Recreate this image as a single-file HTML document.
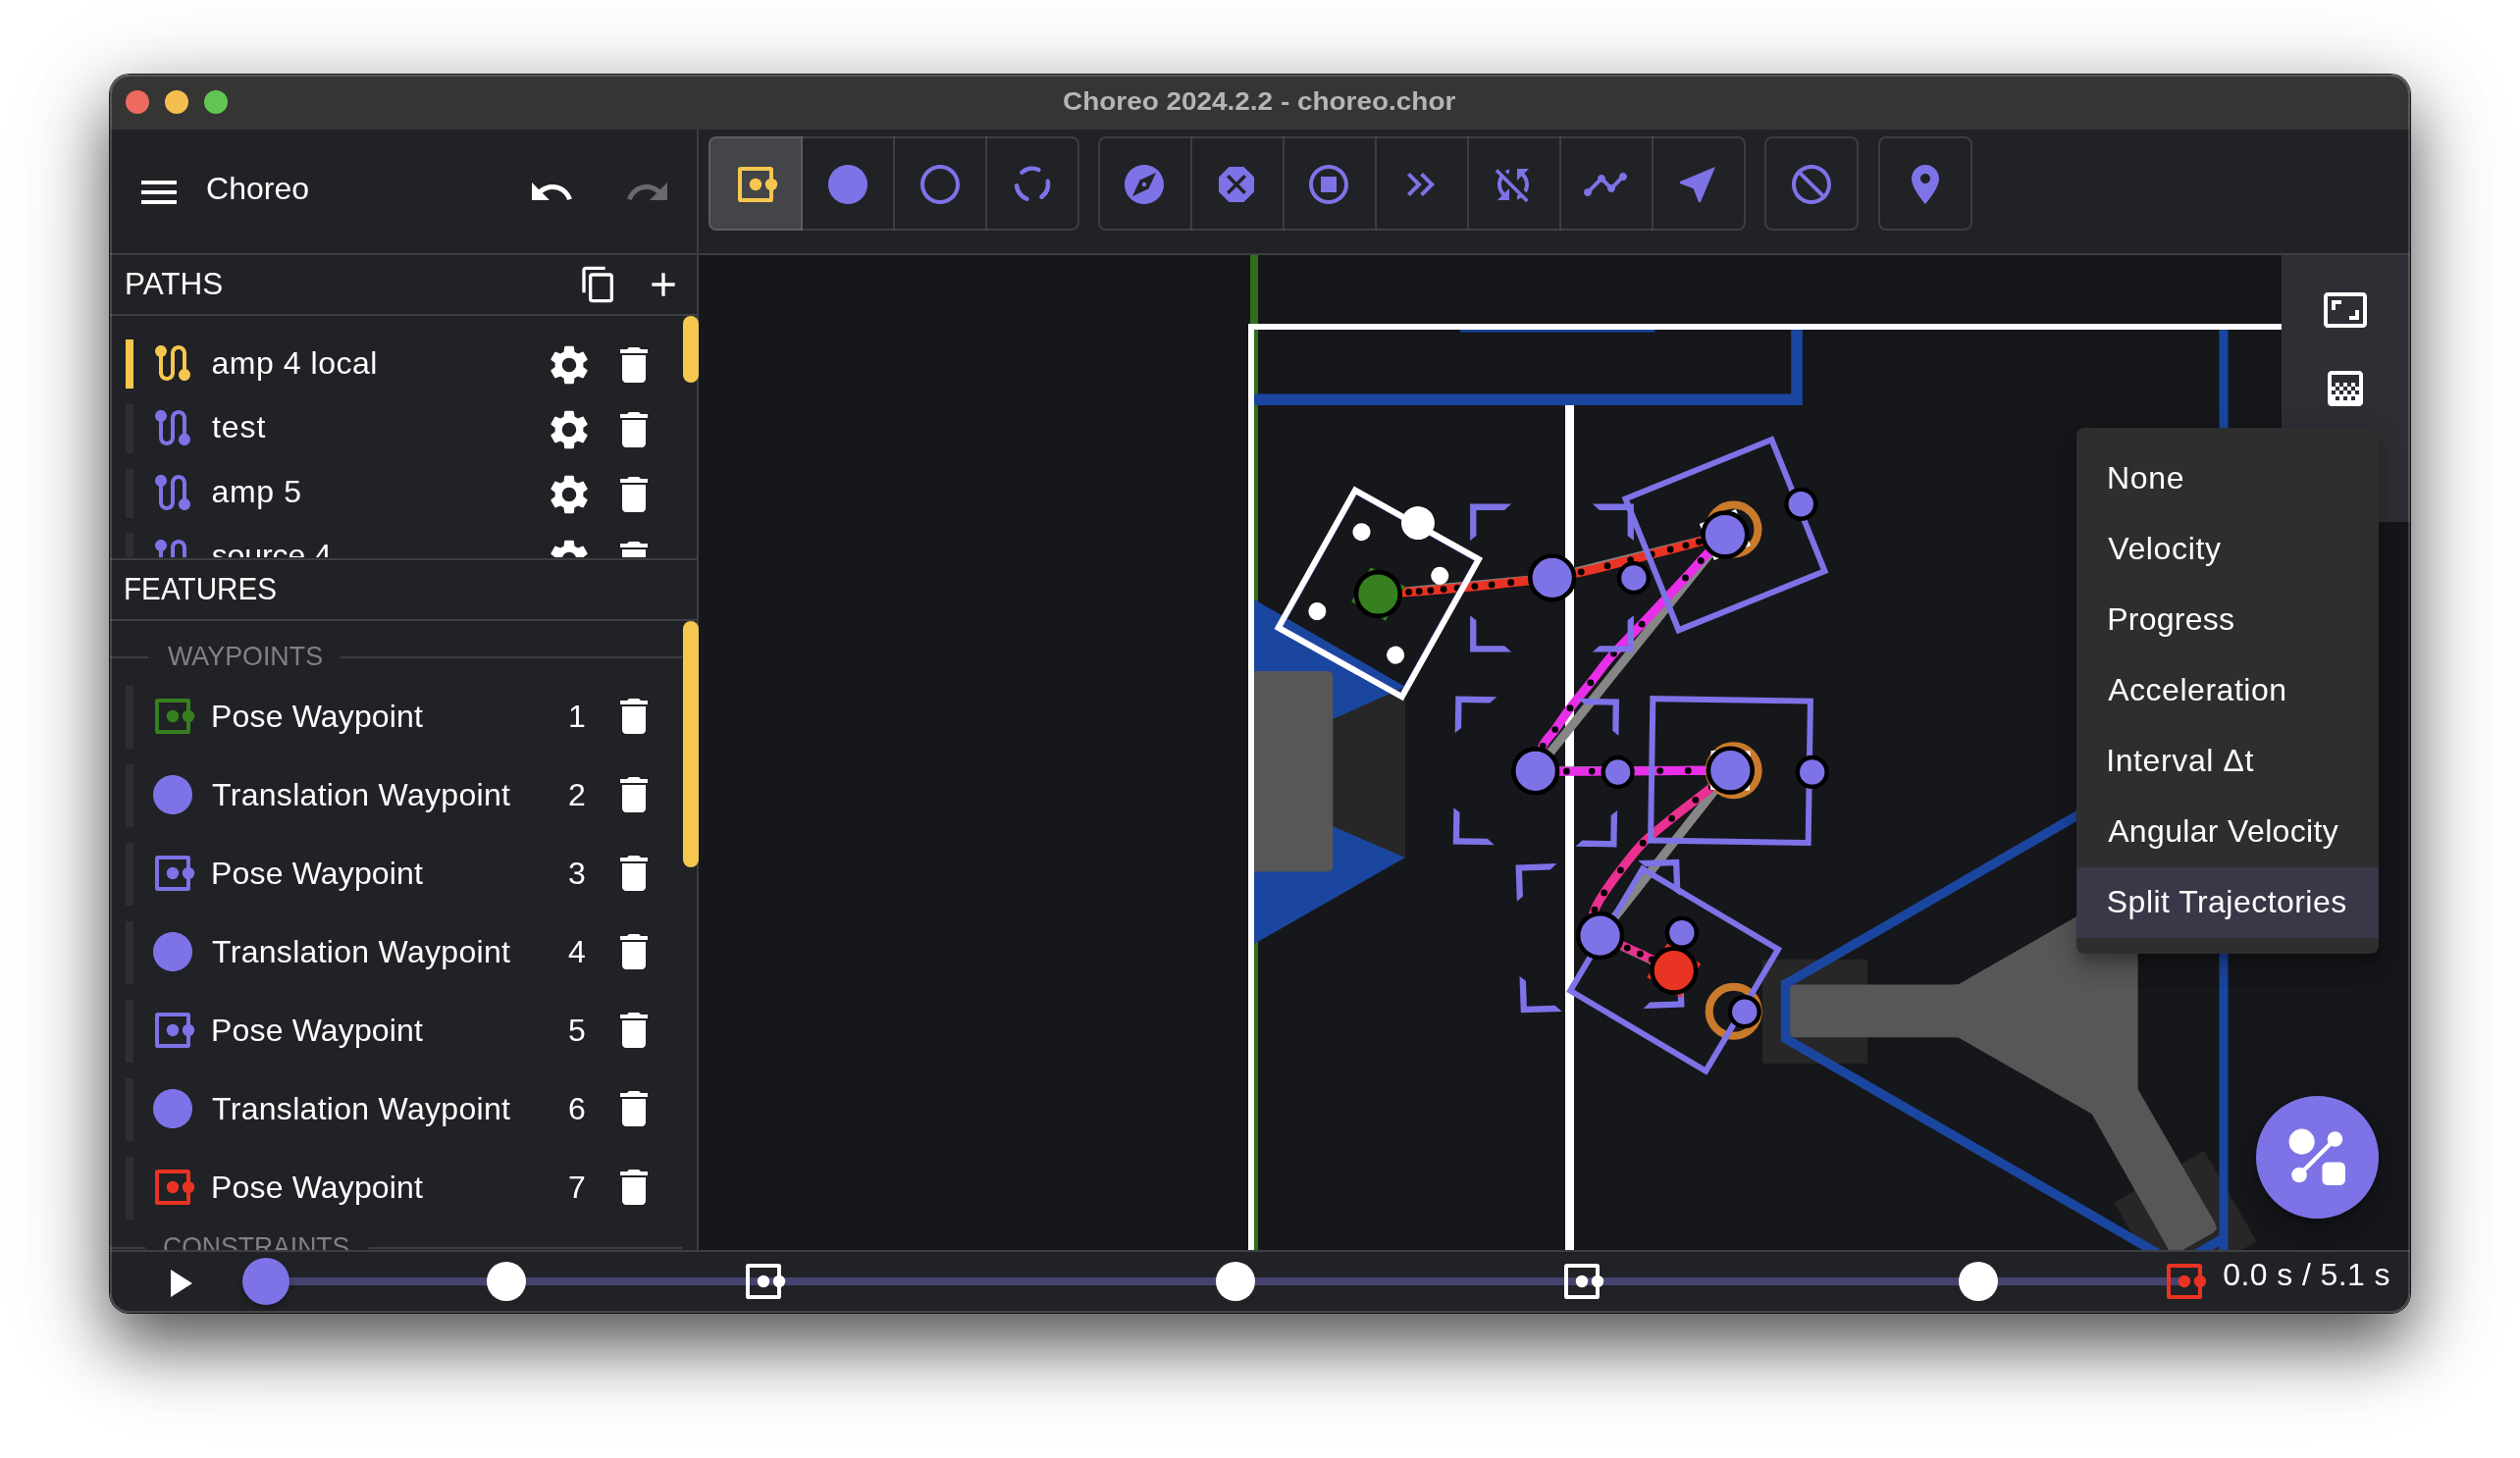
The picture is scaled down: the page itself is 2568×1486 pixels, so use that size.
<!DOCTYPE html>
<html lang="en"><head><meta charset="utf-8"><title>Choreo 2024.2.2 - choreo.chor</title>
<style>
html,body{margin:0;padding:0;background:#fff;}
body{width:2568px;height:1486px;overflow:hidden;position:relative;font-family:"Liberation Sans",sans-serif;}
.abs,.ic,.t,.r{position:absolute;}
.ic{display:block;overflow:visible;}
.t{white-space:nowrap;line-height:1;}
#shadow{position:absolute;left:112px;top:76px;width:2344px;height:1262px;border-radius:20px;
 box-shadow:0 0 0 1px rgba(0,0,0,.85), 0 32px 68px 0 rgba(0,0,0,.62), 0 20px 120px 0 rgba(0,0,0,.16);}
#win{will-change:transform;position:absolute;left:0;top:0;width:2568px;height:1486px;clip-path:inset(76px 112px 148px 112px round 20px);}
#rim{position:absolute;left:112px;top:76px;width:2344px;height:1262px;border-radius:20px;box-sizing:border-box;border:2px solid rgba(255,255,255,.17);pointer-events:none;}
.tb{position:absolute;top:139px;width:96px;height:96px;box-sizing:border-box;border:2px solid rgba(255,255,255,.125);}
</style></head><body>
<div id="shadow"></div>
<div id="win">

<div class="r" style="left:112px;top:76px;width:2344px;height:56px;background:#353533"></div>
<div class="r" style="left:112px;top:132px;width:2344px;height:1206px;background:#212226"></div>
<div class="r" style="left:128px;top:92px;width:24px;height:24px;border-radius:50%;background:#ed6a5f"></div>
<div class="r" style="left:168px;top:92px;width:24px;height:24px;border-radius:50%;background:#f5bf4f"></div>
<div class="r" style="left:208px;top:92px;width:24px;height:24px;border-radius:50%;background:#61c554"></div>
<div class="t " style="left:1082.99px;top:89.99px;font-size:26px;letter-spacing:0.000px;color:#b5b5b3;transform:scaleX(1.0738);transform-origin:0 0;font-weight:700;">Choreo 2024.2.2 - choreo.chor</div>
<div class="r" style="left:712px;top:260px;width:1744px;height:1014px;overflow:hidden;background:#16171b">
<svg class="ic" style="left:0;top:0;width:1744px;height:1014px" viewBox="712 260 1744 1014">
<line x1="1278" y1="260" x2="1278" y2="1274" stroke="#2f6e1c" stroke-width="8" stroke-linecap="butt"/>
<rect x="1278" y="700" width="154" height="174" fill="#272727"/>
<polygon points="1278.0,611.0 1432.0,700.0 1358.0,733.0 1358.0,842.0 1432.0,874.0 1278.0,962.0" fill="#1b469f"/>
<rect x="1274" y="684" width="84.3" height="204.5" rx="5" fill="#575757"/>
<polyline points="1278,407.3 1831,407.3 1831,336" fill="none" stroke="#1b469f" stroke-width="11.6"/>
<line x1="1488" y1="337" x2="1686.5" y2="337" stroke="#1b469f" stroke-width="3" stroke-linecap="butt"/>
<line x1="1599.5" y1="413" x2="1599.5" y2="1274" stroke="#fff" stroke-width="9" stroke-linecap="butt"/>
<rect x="1796" y="977.8" width="107" height="106" fill="#272727"/>
<polygon points="2246.1,1172.7 2299.6,1265.3 2207.9,1318.3 2154.4,1225.7" fill="#272727"/>
<polygon points="1990.0,1003.6 1995.3,1003.6 2178.6,898.3 2178.6,1110.0 2257.0,1246.0 2259.0,1252.5 2254.5,1257.0 2213.5,1280.0 2131.6,1135.3 1995.3,1057.2 1990.0,1057.2" fill="#575757"/>
<rect x="1823" y="1003.6" width="180" height="53.6" rx="5.5" fill="#575757"/>
<line x1="2266" y1="336" x2="2266" y2="1274" stroke="#1b469f" stroke-width="9" stroke-linecap="butt"/>
<polyline points="2266,745 1819.5,1003 1819.5,1058.5 2219,1289.2 2266,1262" fill="none" stroke="#1b469f" stroke-width="9.5" stroke-linejoin="miter"/>
<rect x="1275" y="333" width="2000" height="1400" fill="none" stroke="#fff" stroke-width="6"/>
<polyline points="1404.4,605.5 1581.7,588.9 1757.9,545.0 1564.7,785.8 1763.3,785.2 1630.6,953.6 1705.8,989.2" fill="none" stroke="#868686" stroke-width="9" stroke-linejoin="round"/>
<path d="M1404.4,605.5 C1409.6,605.1 1428.6,603.9 1435.6,603.4 C1442.6,602.9 1442.5,603.0 1446.2,602.7 C1449.9,602.4 1453.8,602.1 1457.9,601.8 C1462.1,601.4 1466.6,601.0 1471.1,600.6 C1475.6,600.2 1479.8,599.8 1485.1,599.3 C1490.4,598.8 1497.1,598.2 1502.9,597.6 C1508.7,597.0 1514.0,596.5 1520.1,595.9 C1526.2,595.2 1529.4,594.9 1539.7,593.7 C1550.0,592.5 1569.8,590.7 1581.7,588.9 C1593.6,587.1 1601.9,585.0 1611.3,583.0 C1620.7,581.0 1629.6,578.8 1638.0,576.7 C1646.4,574.6 1654.1,572.6 1661.6,570.6 C1669.1,568.6 1676.4,566.7 1683.2,564.9 C1690.0,563.1 1696.4,561.5 1702.2,560.0 C1708.0,558.5 1713.1,557.1 1718.0,555.8 C1722.9,554.5 1724.8,554.0 1731.4,552.2 C1738.1,550.4 1753.5,546.2 1757.9,545.0" fill="none" stroke="#e93323" stroke-width="9.1" stroke-linecap="round"/>
<path d="M1757.9,545.0 C1753.8,549.4 1740.0,564.1 1733.3,571.4 C1726.6,578.7 1727.5,578.1 1717.5,588.9 C1707.5,599.7 1685.3,623.2 1673.1,636.1 C1660.9,649.0 1653.1,656.2 1644.4,666.1 C1635.7,676.0 1628.2,686.5 1620.8,695.8 C1613.4,705.1 1606.0,713.7 1600.0,721.7 C1594.0,729.7 1589.3,737.2 1584.7,743.6 C1580.1,750.0 1575.5,753.3 1572.2,760.3 C1568.9,767.3 1566.0,781.5 1564.7,785.8" fill="none" stroke="#e82ee8" stroke-width="9.1" stroke-linecap="round"/>
<path d="M1564.7,785.8 C1570.0,785.9 1586.8,786.2 1596.4,786.2 C1606.0,786.2 1606.3,786.2 1622.2,786.1 C1638.1,786.0 1675.4,785.7 1691.7,785.6 C1708.0,785.5 1708.4,785.5 1720.3,785.4 C1732.2,785.3 1756.1,785.2 1763.3,785.2" fill="none" stroke="#e82ee8" stroke-width="9.1" stroke-linecap="round"/>
<path d="M1763.3,785.2 C1760.2,788.0 1750.3,797.2 1744.4,802.2 C1738.5,807.2 1734.6,810.0 1727.8,815.3 C1721.0,820.6 1712.5,826.9 1703.6,834.2 C1694.7,841.5 1682.9,850.4 1674.2,859.2 C1665.5,868.0 1658.0,878.4 1651.4,886.9 C1644.8,895.4 1639.1,903.3 1634.7,910.0 C1630.3,916.7 1627.2,922.1 1625.0,927.2 C1622.8,932.3 1622.1,938.3 1621.5,940.5" fill="none" stroke="#ea3090" stroke-width="9.1" stroke-linecap="round"/>
<path d="M1630.6,953.6 C1635.2,955.7 1651.5,963.0 1658.3,966.1 C1665.1,969.2 1667.2,970.2 1671.4,972.2 C1675.6,974.2 1677.6,975.0 1683.3,977.8 C1689.0,980.6 1702.0,987.3 1705.8,989.2" fill="none" stroke="#ea3090" stroke-width="9.1" stroke-linecap="round"/>
<g fill="#000"><circle cx="1435.6" cy="603.4" r="3.4"/><circle cx="1446.2" cy="602.7" r="3.4"/><circle cx="1457.9" cy="601.8" r="3.4"/><circle cx="1471.1" cy="600.6" r="3.4"/><circle cx="1485.1" cy="599.3" r="3.4"/><circle cx="1502.9" cy="597.6" r="3.4"/><circle cx="1520.1" cy="595.9" r="3.4"/><circle cx="1539.7" cy="593.7" r="3.4"/><circle cx="1611.3" cy="583" r="3.4"/><circle cx="1638" cy="576.7" r="3.4"/><circle cx="1661.6" cy="570.6" r="3.4"/><circle cx="1683.2" cy="564.9" r="3.4"/><circle cx="1702.2" cy="560.0" r="3.4"/><circle cx="1718" cy="555.8" r="3.4"/><circle cx="1731.4" cy="552.2" r="3.4"/><circle cx="1733.3" cy="571.4" r="3.4"/><circle cx="1717.5" cy="588.9" r="3.4"/><circle cx="1673.1" cy="636.1" r="3.4"/><circle cx="1644.4" cy="666.1" r="3.4"/><circle cx="1620.8" cy="695.8" r="3.4"/><circle cx="1600" cy="721.7" r="3.4"/><circle cx="1584.7" cy="743.6" r="3.4"/><circle cx="1572.2" cy="760.3" r="3.4"/><circle cx="1596.4" cy="786.2" r="3.4"/><circle cx="1622.2" cy="786.1" r="3.4"/><circle cx="1691.7" cy="785.6" r="3.4"/><circle cx="1720.3" cy="785.4" r="3.4"/><circle cx="1744.4" cy="802.2" r="3.4"/><circle cx="1727.8" cy="815.3" r="3.4"/><circle cx="1703.6" cy="834.2" r="3.4"/><circle cx="1674.2" cy="859.2" r="3.4"/><circle cx="1651.4" cy="886.9" r="3.4"/><circle cx="1634.7" cy="910" r="3.4"/><circle cx="1625" cy="927.2" r="3.4"/><circle cx="1658.3" cy="966.1" r="3.4"/><circle cx="1671.4" cy="972.2" r="3.4"/><circle cx="1683.3" cy="977.8" r="3.4"/></g>
<g transform="translate(1581.5,589.1) rotate(0)" fill="#7d73e7"><polygon points="-83.4,-75.5 -41.4,-75.5 -48.4,-69.2 -77.1,-69.2 -77.1,-43.1 -83.4,-38.1" /><polygon points="-83.4,75.5 -41.4,75.5 -48.4,69.2 -77.1,69.2 -77.1,43.1 -83.4,38.1" /><polygon points="83.4,-75.5 41.4,-75.5 48.4,-69.2 77.1,-69.2 77.1,-43.1 83.4,-38.1" /><polygon points="83.4,75.5 41.4,75.5 48.4,69.2 77.1,69.2 77.1,43.1 83.4,38.1" /></g>
<g transform="translate(1565.4,786.5) rotate(1.0)" fill="#7d73e7"><polygon points="-83.4,-75.5 -41.4,-75.5 -48.4,-69.2 -77.1,-69.2 -77.1,-43.1 -83.4,-38.1" /><polygon points="-83.4,75.5 -41.4,75.5 -48.4,69.2 -77.1,69.2 -77.1,43.1 -83.4,38.1" /><polygon points="83.4,-75.5 41.4,-75.5 48.4,-69.2 77.1,-69.2 77.1,-43.1 83.4,-38.1" /><polygon points="83.4,75.5 41.4,75.5 48.4,69.2 77.1,69.2 77.1,43.1 83.4,38.1" /></g>
<g transform="translate(1630.5,954.0) rotate(-2.0)" fill="#7d73e7"><polygon points="-83.4,-75.5 -41.4,-75.5 -48.4,-69.2 -77.1,-69.2 -77.1,-43.1 -83.4,-38.1" /><polygon points="-83.4,75.5 -41.4,75.5 -48.4,69.2 -77.1,69.2 -77.1,43.1 -83.4,38.1" /><polygon points="83.4,-75.5 41.4,-75.5 48.4,-69.2 77.1,-69.2 77.1,-43.1 83.4,-38.1" /><polygon points="83.4,75.5 41.4,75.5 48.4,69.2 77.1,69.2 77.1,43.1 83.4,38.1" /></g>
<circle cx="1766.5" cy="539.5" r="25" fill="none" stroke="#c97a2b" stroke-width="8"/>
<circle cx="1766.7" cy="785.3" r="25" fill="none" stroke="#c97a2b" stroke-width="8"/>
<circle cx="1766.7" cy="1030.8" r="25" fill="none" stroke="#c97a2b" stroke-width="8"/>
<g transform="translate(1758,545.2) rotate(-22)"><rect x="-80.3" y="-72.2" width="160.6" height="144.4" fill="none" stroke="#7d73e7" stroke-width="6"/></g>
<g transform="translate(1763.5,785.6) rotate(0.9)"><rect x="-80.3" y="-72.2" width="160.6" height="144.4" fill="none" stroke="#7d73e7" stroke-width="6"/></g>
<g transform="translate(1706.1,988.6) rotate(30.7)"><rect x="-80.3" y="-72.2" width="160.6" height="144.4" fill="none" stroke="#7d73e7" stroke-width="6"/></g>
<g transform="translate(1404.8,604.9) rotate(-60.8)"><rect x="-79.8" y="-71.7" width="159.6" height="143.4" fill="none" stroke="#7d73e7" stroke-width="6"/></g>
<g transform="translate(1404.8,604.9) rotate(-60.8)"><rect x="-80.3" y="-72.2" width="160.6" height="144.4" fill="none" stroke="#fff" stroke-width="6"/><circle cx="-46.3" cy="-45.7" r="9" fill="#fff"/><circle cx="-46.3" cy="45.7" r="9" fill="#fff"/><circle cx="46.3" cy="-45.7" r="9" fill="#fff"/><circle cx="46.3" cy="45.7" r="9" fill="#fff"/><circle cx="82.3" cy="0" r="17" fill="#fff"/></g>
<rect x="-20.0" y="-20.0" width="40" height="40" fill="#36801f" transform="translate(1404.4,605.5) rotate(-60.7)"/>
<rect x="-20.0" y="-20.0" width="40" height="40" fill="#fff" transform="translate(1757.9,545.0) rotate(-22)"/>
<rect x="-20.0" y="-20.0" width="40" height="40" fill="#fff" transform="translate(1763.3,785.2) rotate(0.9)"/>
<rect x="-20.0" y="-20.0" width="40" height="40" fill="#e93323" transform="translate(1705.8,989.2) rotate(30.9)"/>
<circle cx="1835.3" cy="513.8" r="14.9" fill="#7d73e7" stroke="#000" stroke-width="4.4"/>
<circle cx="1846.7" cy="786.9" r="14.9" fill="#7d73e7" stroke="#000" stroke-width="4.4"/>
<circle cx="1777.8" cy="1031.2" r="14.9" fill="#7d73e7" stroke="#000" stroke-width="4.4"/>
<circle cx="1664.9" cy="589" r="14.9" fill="#7d73e7" stroke="#000" stroke-width="4.4"/>
<circle cx="1648.6" cy="787" r="14.9" fill="#7d73e7" stroke="#000" stroke-width="4.4"/>
<circle cx="1713.9" cy="950.8" r="14.9" fill="#7d73e7" stroke="#000" stroke-width="4.4"/>
<circle cx="1404.4" cy="605.5" r="22.4" fill="#36801f" stroke="#000" stroke-width="4.6"/>
<circle cx="1581.7" cy="588.9" r="22.4" fill="#7d73e7" stroke="#000" stroke-width="4.6"/>
<circle cx="1757.9" cy="545.0" r="22.4" fill="#7d73e7" stroke="#000" stroke-width="4.6"/>
<circle cx="1564.7" cy="785.8" r="22.4" fill="#7d73e7" stroke="#000" stroke-width="4.6"/>
<circle cx="1763.3" cy="785.2" r="22.4" fill="#7d73e7" stroke="#000" stroke-width="4.6"/>
<circle cx="1630.6" cy="953.6" r="22.4" fill="#7d73e7" stroke="#000" stroke-width="4.6"/>
<circle cx="1705.8" cy="989.2" r="22.4" fill="#e93323" stroke="#000" stroke-width="4.6"/>
</svg></div>
<div class="r" style="left:112px;top:258px;width:2344px;height:2px;background:#3e3f43"></div>
<div class="r" style="left:710px;top:132px;width:2px;height:1143px;background:#3e3f43"></div>
<div class="r" style="left:112px;top:320px;width:598px;height:2px;background:#3e3f43"></div>
<div class="r" style="left:112px;top:568.5px;width:598px;height:2px;background:#3e3f43"></div>
<div class="r" style="left:112px;top:631.4px;width:598px;height:2px;background:#3e3f43"></div>
<svg class="ic" style="left:138px;top:172px;width:48px;height:48px" viewBox="0 0 24 24"><path fill="#fff" d="M3 18h18v-2H3v2zm0-5h18v-2H3v2zm0-7v2h18V6H3z"/></svg>
<div class="t " style="left:210.00px;top:176.31px;font-size:32px;letter-spacing:0.028px;color:#fff;">Choreo</div>
<svg class="ic" style="left:538px;top:172px;width:48px;height:48px" viewBox="0 0 24 24"><path fill="#fff" d="M12.5 8c-2.65 0-5.05.99-6.9 2.6L2 7v9h9l-3.62-3.62c1.39-1.16 3.16-1.88 5.12-1.88 3.54 0 6.55 2.31 7.6 5.5l2.37-.78C21.08 11.03 17.15 8 12.5 8z"/></svg>
<svg class="ic" style="left:636px;top:172px;width:48px;height:48px" viewBox="0 0 24 24"><path fill="#696a6e" d="M18.4 10.6C16.55 8.99 14.15 8 11.5 8c-4.65 0-8.58 3.03-9.96 7.22L3.9 16c1.05-3.19 4.05-5.5 7.6-5.5 1.95 0 3.73.72 5.12 1.88L13 16h9V7l-3.6 3.6z"/></svg>
<div class="t " style="left:127.05px;top:272.91px;font-size:32px;letter-spacing:0.000px;color:#fff;transform:scaleX(0.9835);transform-origin:0 0;">PATHS</div>
<svg class="ic" style="left:590px;top:270px;width:40px;height:40px" viewBox="0 0 24 24"><path fill="#fff" d="M16 1H4c-1.1 0-2 .9-2 2v14h2V3h12V1zm3 4H8c-1.1 0-2 .9-2 2v14c0 1.1.9 2 2 2h11c1.1 0 2-.9 2-2V7c0-1.1-.9-2-2-2zm0 16H8V7h11v14z"/></svg>
<svg class="ic" style="left:656px;top:270px;width:40px;height:40px" viewBox="0 0 24 24"><path fill="#fff" d="M19 13h-6v6h-2v-6H5v-2h6V5h2v6h6v2z"/></svg>
<div class="r" style="left:112px;top:322px;width:598px;height:246px;overflow:hidden">
<div class="r" style="left:16px;top:24px;width:8px;height:50px;background:#f6c74f"></div>
<svg class="ic" style="left:40px;top:24px;width:48px;height:48px" viewBox="0 0 24 24"><path fill="#f6c74f" d="M19 15.18V7c0-2.21-1.79-4-4-4s-4 1.79-4 4v10c0 1.1-.9 2-2 2s-2-.9-2-2V8.82C8.16 8.4 9 7.3 9 6c0-1.66-1.34-3-3-3S3 4.34 3 6c0 1.3.84 2.4 2 2.82V17c0 2.21 1.79 4 4 4s4-1.79 4-4V7c0-1.1.9-2 2-2s2 .9 2 2v8.18c-1.16.41-2 1.51-2 2.82 0 1.66 1.34 3 3 3s3-1.34 3-3c0-1.3-.84-2.4-2-2.82z"/></svg>
<div class="t " style="left:103.56px;top:31.91px;font-size:32px;letter-spacing:0.528px;color:#fff;">amp 4 local</div>
<svg class="ic" style="left:444px;top:26px;width:48px;height:48px" viewBox="0 0 24 24"><path fill="#fff" d="M19.14 12.94c.04-.3.06-.61.06-.94 0-.32-.02-.64-.07-.94l2.03-1.58c.18-.14.23-.41.12-.61l-1.92-3.32c-.12-.22-.37-.29-.59-.22l-2.39.96c-.5-.38-1.03-.7-1.62-.94l-.36-2.54c-.04-.24-.24-.41-.48-.41h-3.84c-.24 0-.43.17-.47.41l-.36 2.54c-.59.24-1.13.57-1.62.94l-2.39-.96c-.22-.08-.47 0-.59.22L2.74 8.87c-.12.21-.08.47.12.61l2.03 1.58c-.05.3-.09.63-.09.94s.02.64.07.94l-2.03 1.58c-.18.14-.23.41-.12.61l1.92 3.32c.12.22.37.29.59.22l2.39-.96c.5.38 1.03.7 1.62.94l.36 2.54c.05.24.24.41.48.41h3.84c.24 0 .44-.17.47-.41l.36-2.54c.59-.24 1.13-.56 1.62-.94l2.39.96c.22.08.47 0 .59-.22l1.92-3.32c.12-.22.07-.47-.12-.61l-2.01-1.58zM12 15.6c-1.98 0-3.6-1.62-3.6-3.6s1.62-3.6 3.6-3.6 3.6 1.62 3.6 3.6-1.62 3.6-3.6 3.6z"/></svg>
<svg class="ic" style="left:510px;top:26px;width:48px;height:48px" viewBox="0 0 24 24"><path fill="#fff" d="M6 19c0 1.1.9 2 2 2h8c1.1 0 2-.9 2-2V7H6v12zM19 4h-3.5l-1-1h-5l-1 1H5v2h14V4z"/></svg>
<div class="r" style="left:16px;top:90px;width:8px;height:50px;background:#2e2f34"></div>
<svg class="ic" style="left:40px;top:90.39999999999998px;width:48px;height:48px" viewBox="0 0 24 24"><path fill="#7d73e7" d="M19 15.18V7c0-2.21-1.79-4-4-4s-4 1.79-4 4v10c0 1.1-.9 2-2 2s-2-.9-2-2V8.82C8.16 8.4 9 7.3 9 6c0-1.66-1.34-3-3-3S3 4.34 3 6c0 1.3.84 2.4 2 2.82V17c0 2.21 1.79 4 4 4s4-1.79 4-4V7c0-1.1.9-2 2-2s2 .9 2 2v8.18c-1.16.41-2 1.51-2 2.82 0 1.66 1.34 3 3 3s3-1.34 3-3c0-1.3-.84-2.4-2-2.82z"/></svg>
<div class="t " style="left:104.01px;top:96.91px;font-size:32px;letter-spacing:0.901px;color:#fff;">test</div>
<svg class="ic" style="left:444px;top:92px;width:48px;height:48px" viewBox="0 0 24 24"><path fill="#fff" d="M19.14 12.94c.04-.3.06-.61.06-.94 0-.32-.02-.64-.07-.94l2.03-1.58c.18-.14.23-.41.12-.61l-1.92-3.32c-.12-.22-.37-.29-.59-.22l-2.39.96c-.5-.38-1.03-.7-1.62-.94l-.36-2.54c-.04-.24-.24-.41-.48-.41h-3.84c-.24 0-.43.17-.47.41l-.36 2.54c-.59.24-1.13.57-1.62.94l-2.39-.96c-.22-.08-.47 0-.59.22L2.74 8.87c-.12.21-.08.47.12.61l2.03 1.58c-.05.3-.09.63-.09.94s.02.64.07.94l-2.03 1.58c-.18.14-.23.41-.12.61l1.92 3.32c.12.22.37.29.59.22l2.39-.96c.5.38 1.03.7 1.62.94l.36 2.54c.05.24.24.41.48.41h3.84c.24 0 .44-.17.47-.41l.36-2.54c.59-.24 1.13-.56 1.62-.94l2.39.96c.22.08.47 0 .59-.22l1.92-3.32c.12-.22.07-.47-.12-.61l-2.01-1.58zM12 15.6c-1.98 0-3.6-1.62-3.6-3.6s1.62-3.6 3.6-3.6 3.6 1.62 3.6 3.6-1.62 3.6-3.6 3.6z"/></svg>
<svg class="ic" style="left:510px;top:92px;width:48px;height:48px" viewBox="0 0 24 24"><path fill="#fff" d="M6 19c0 1.1.9 2 2 2h8c1.1 0 2-.9 2-2V7H6v12zM19 4h-3.5l-1-1h-5l-1 1H5v2h14V4z"/></svg>
<div class="r" style="left:16px;top:155.5px;width:8px;height:50px;background:#2e2f34"></div>
<svg class="ic" style="left:40px;top:156.2px;width:48px;height:48px" viewBox="0 0 24 24"><path fill="#7d73e7" d="M19 15.18V7c0-2.21-1.79-4-4-4s-4 1.79-4 4v10c0 1.1-.9 2-2 2s-2-.9-2-2V8.82C8.16 8.4 9 7.3 9 6c0-1.66-1.34-3-3-3S3 4.34 3 6c0 1.3.84 2.4 2 2.82V17c0 2.21 1.79 4 4 4s4-1.79 4-4V7c0-1.1.9-2 2-2s2 .9 2 2v8.18c-1.16.41-2 1.51-2 2.82 0 1.66 1.34 3 3 3s3-1.34 3-3c0-1.3-.84-2.4-2-2.82z"/></svg>
<div class="t " style="left:103.56px;top:162.71px;font-size:32px;letter-spacing:0.620px;color:#fff;">amp 5</div>
<svg class="ic" style="left:444px;top:158.2px;width:48px;height:48px" viewBox="0 0 24 24"><path fill="#fff" d="M19.14 12.94c.04-.3.06-.61.06-.94 0-.32-.02-.64-.07-.94l2.03-1.58c.18-.14.23-.41.12-.61l-1.92-3.32c-.12-.22-.37-.29-.59-.22l-2.39.96c-.5-.38-1.03-.7-1.62-.94l-.36-2.54c-.04-.24-.24-.41-.48-.41h-3.84c-.24 0-.43.17-.47.41l-.36 2.54c-.59.24-1.13.57-1.62.94l-2.39-.96c-.22-.08-.47 0-.59.22L2.74 8.87c-.12.21-.08.47.12.61l2.03 1.58c-.05.3-.09.63-.09.94s.02.64.07.94l-2.03 1.58c-.18.14-.23.41-.12.61l1.92 3.32c.12.22.37.29.59.22l2.39-.96c.5.38 1.03.7 1.62.94l.36 2.54c.05.24.24.41.48.41h3.84c.24 0 .44-.17.47-.41l.36-2.54c.59-.24 1.13-.56 1.62-.94l2.39.96c.22.08.47 0 .59-.22l1.92-3.32c.12-.22.07-.47-.12-.61l-2.01-1.58zM12 15.6c-1.98 0-3.6-1.62-3.6-3.6s1.62-3.6 3.6-3.6 3.6 1.62 3.6 3.6-1.62 3.6-3.6 3.6z"/></svg>
<svg class="ic" style="left:510px;top:158.2px;width:48px;height:48px" viewBox="0 0 24 24"><path fill="#fff" d="M6 19c0 1.1.9 2 2 2h8c1.1 0 2-.9 2-2V7H6v12zM19 4h-3.5l-1-1h-5l-1 1H5v2h14V4z"/></svg>
<div class="r" style="left:16px;top:221px;width:8px;height:50px;background:#2e2f34"></div>
<svg class="ic" style="left:40px;top:222.20000000000005px;width:48px;height:48px" viewBox="0 0 24 24"><path fill="#7d73e7" d="M19 15.18V7c0-2.21-1.79-4-4-4s-4 1.79-4 4v10c0 1.1-.9 2-2 2s-2-.9-2-2V8.82C8.16 8.4 9 7.3 9 6c0-1.66-1.34-3-3-3S3 4.34 3 6c0 1.3.84 2.4 2 2.82V17c0 2.21 1.79 4 4 4s4-1.79 4-4V7c0-1.1.9-2 2-2s2 .9 2 2v8.18c-1.16.41-2 1.51-2 2.82 0 1.66 1.34 3 3 3s3-1.34 3-3c0-1.3-.84-2.4-2-2.82z"/></svg>
<div class="t " style="left:103.70px;top:227.91px;font-size:32px;letter-spacing:-0.105px;color:#fff;">source 4</div>
<svg class="ic" style="left:444px;top:224.20000000000005px;width:48px;height:48px" viewBox="0 0 24 24"><path fill="#fff" d="M19.14 12.94c.04-.3.06-.61.06-.94 0-.32-.02-.64-.07-.94l2.03-1.58c.18-.14.23-.41.12-.61l-1.92-3.32c-.12-.22-.37-.29-.59-.22l-2.39.96c-.5-.38-1.03-.7-1.62-.94l-.36-2.54c-.04-.24-.24-.41-.48-.41h-3.84c-.24 0-.43.17-.47.41l-.36 2.54c-.59.24-1.13.57-1.62.94l-2.39-.96c-.22-.08-.47 0-.59.22L2.74 8.87c-.12.21-.08.47.12.61l2.03 1.58c-.05.3-.09.63-.09.94s.02.64.07.94l-2.03 1.58c-.18.14-.23.41-.12.61l1.92 3.32c.12.22.37.29.59.22l2.39-.96c.5.38 1.03.7 1.62.94l.36 2.54c.05.24.24.41.48.41h3.84c.24 0 .44-.17.47-.41l.36-2.54c.59-.24 1.13-.56 1.62-.94l2.39.96c.22.08.47 0 .59-.22l1.92-3.32c.12-.22.07-.47-.12-.61l-2.01-1.58zM12 15.6c-1.98 0-3.6-1.62-3.6-3.6s1.62-3.6 3.6-3.6 3.6 1.62 3.6 3.6-1.62 3.6-3.6 3.6z"/></svg>
<svg class="ic" style="left:510px;top:224.20000000000005px;width:48px;height:48px" viewBox="0 0 24 24"><path fill="#fff" d="M6 19c0 1.1.9 2 2 2h8c1.1 0 2-.9 2-2V7H6v12zM19 4h-3.5l-1-1h-5l-1 1H5v2h14V4z"/></svg>
</div>
<div class="r" style="left:696px;top:322px;width:16px;height:68px;border-radius:8px;background:#f6c74f"></div>
<div class="t " style="left:126.05px;top:584.11px;font-size:32px;letter-spacing:0.000px;color:#fff;transform:scaleX(0.9272);transform-origin:0 0;">FEATURES</div>
<div class="r" style="left:112px;top:633px;width:598px;height:641px;overflow:hidden">
<div class="r" style="left:0;top:36px;width:39px;height:2px;background:#3e3f43"></div>
<div class="r" style="left:235px;top:36px;width:348px;height:2px;background:#3e3f43"></div>
<div class="t " style="left:58.56px;top:21.80px;font-size:28px;letter-spacing:0.000px;color:#808183;transform:scaleX(0.9584);transform-origin:0 0;">WAYPOINTS</div>
<div class="r" style="left:16px;top:66px;width:8px;height:64px;background:#2e2f34"></div>
<svg class="ic" style="left:40px;top:73px;width:48px;height:48px" viewBox="0 0 24 24"><rect x="4" y="4" width="16" height="16" rx="0.4" fill="none" stroke="#36801f" stroke-width="2"/><circle cx="12" cy="12" r="3.1" fill="#36801f"/><circle cx="20" cy="12" r="3.1" fill="#36801f"/></svg>
<div class="t " style="left:103.11px;top:81.31px;font-size:32px;letter-spacing:0.144px;color:#fff;">Pose Waypoint</div>
<div class="t " style="left:467.10px;top:81.31px;font-size:32px;letter-spacing:0.000px;color:#fff;">1</div>
<svg class="ic" style="left:510px;top:73px;width:48px;height:48px" viewBox="0 0 24 24"><path fill="#fff" d="M6 19c0 1.1.9 2 2 2h8c1.1 0 2-.9 2-2V7H6v12zM19 4h-3.5l-1-1h-5l-1 1H5v2h14V4z"/></svg>
<div class="r" style="left:16px;top:146px;width:8px;height:64px;background:#2e2f34"></div>
<svg class="ic" style="left:40px;top:153px;width:48px;height:48px" viewBox="0 0 24 24"><path fill="#7d73e7" d="M12 2C6.47 2 2 6.47 2 12s4.47 10 10 10 10-4.47 10-10S17.53 2 12 2z"/></svg>
<div class="t " style="left:104.07px;top:161.31px;font-size:32px;letter-spacing:0.295px;color:#fff;">Translation Waypoint</div>
<div class="t " style="left:467.10px;top:161.31px;font-size:32px;letter-spacing:0.000px;color:#fff;">2</div>
<svg class="ic" style="left:510px;top:153px;width:48px;height:48px" viewBox="0 0 24 24"><path fill="#fff" d="M6 19c0 1.1.9 2 2 2h8c1.1 0 2-.9 2-2V7H6v12zM19 4h-3.5l-1-1h-5l-1 1H5v2h14V4z"/></svg>
<div class="r" style="left:16px;top:226px;width:8px;height:64px;background:#2e2f34"></div>
<svg class="ic" style="left:40px;top:233px;width:48px;height:48px" viewBox="0 0 24 24"><rect x="4" y="4" width="16" height="16" rx="0.4" fill="none" stroke="#7d73e7" stroke-width="2"/><circle cx="12" cy="12" r="3.1" fill="#7d73e7"/><circle cx="20" cy="12" r="3.1" fill="#7d73e7"/></svg>
<div class="t " style="left:103.11px;top:241.31px;font-size:32px;letter-spacing:0.144px;color:#fff;">Pose Waypoint</div>
<div class="t " style="left:467.10px;top:241.31px;font-size:32px;letter-spacing:0.000px;color:#fff;">3</div>
<svg class="ic" style="left:510px;top:233px;width:48px;height:48px" viewBox="0 0 24 24"><path fill="#fff" d="M6 19c0 1.1.9 2 2 2h8c1.1 0 2-.9 2-2V7H6v12zM19 4h-3.5l-1-1h-5l-1 1H5v2h14V4z"/></svg>
<div class="r" style="left:16px;top:306px;width:8px;height:64px;background:#2e2f34"></div>
<svg class="ic" style="left:40px;top:313px;width:48px;height:48px" viewBox="0 0 24 24"><path fill="#7d73e7" d="M12 2C6.47 2 2 6.47 2 12s4.47 10 10 10 10-4.47 10-10S17.53 2 12 2z"/></svg>
<div class="t " style="left:104.07px;top:321.31px;font-size:32px;letter-spacing:0.295px;color:#fff;">Translation Waypoint</div>
<div class="t " style="left:467.10px;top:321.31px;font-size:32px;letter-spacing:0.000px;color:#fff;">4</div>
<svg class="ic" style="left:510px;top:313px;width:48px;height:48px" viewBox="0 0 24 24"><path fill="#fff" d="M6 19c0 1.1.9 2 2 2h8c1.1 0 2-.9 2-2V7H6v12zM19 4h-3.5l-1-1h-5l-1 1H5v2h14V4z"/></svg>
<div class="r" style="left:16px;top:386px;width:8px;height:64px;background:#2e2f34"></div>
<svg class="ic" style="left:40px;top:393px;width:48px;height:48px" viewBox="0 0 24 24"><rect x="4" y="4" width="16" height="16" rx="0.4" fill="none" stroke="#7d73e7" stroke-width="2"/><circle cx="12" cy="12" r="3.1" fill="#7d73e7"/><circle cx="20" cy="12" r="3.1" fill="#7d73e7"/></svg>
<div class="t " style="left:103.11px;top:401.31px;font-size:32px;letter-spacing:0.144px;color:#fff;">Pose Waypoint</div>
<div class="t " style="left:467.10px;top:401.31px;font-size:32px;letter-spacing:0.000px;color:#fff;">5</div>
<svg class="ic" style="left:510px;top:393px;width:48px;height:48px" viewBox="0 0 24 24"><path fill="#fff" d="M6 19c0 1.1.9 2 2 2h8c1.1 0 2-.9 2-2V7H6v12zM19 4h-3.5l-1-1h-5l-1 1H5v2h14V4z"/></svg>
<div class="r" style="left:16px;top:466px;width:8px;height:64px;background:#2e2f34"></div>
<svg class="ic" style="left:40px;top:473px;width:48px;height:48px" viewBox="0 0 24 24"><path fill="#7d73e7" d="M12 2C6.47 2 2 6.47 2 12s4.47 10 10 10 10-4.47 10-10S17.53 2 12 2z"/></svg>
<div class="t " style="left:104.07px;top:481.31px;font-size:32px;letter-spacing:0.295px;color:#fff;">Translation Waypoint</div>
<div class="t " style="left:467.10px;top:481.31px;font-size:32px;letter-spacing:0.000px;color:#fff;">6</div>
<svg class="ic" style="left:510px;top:473px;width:48px;height:48px" viewBox="0 0 24 24"><path fill="#fff" d="M6 19c0 1.1.9 2 2 2h8c1.1 0 2-.9 2-2V7H6v12zM19 4h-3.5l-1-1h-5l-1 1H5v2h14V4z"/></svg>
<div class="r" style="left:16px;top:546px;width:8px;height:64px;background:#2e2f34"></div>
<svg class="ic" style="left:40px;top:553px;width:48px;height:48px" viewBox="0 0 24 24"><rect x="4" y="4" width="16" height="16" rx="0.4" fill="none" stroke="#e93323" stroke-width="2"/><circle cx="12" cy="12" r="3.1" fill="#e93323"/><circle cx="20" cy="12" r="3.1" fill="#e93323"/></svg>
<div class="t " style="left:103.11px;top:561.31px;font-size:32px;letter-spacing:0.144px;color:#fff;">Pose Waypoint</div>
<div class="t " style="left:467.10px;top:561.31px;font-size:32px;letter-spacing:0.000px;color:#fff;">7</div>
<svg class="ic" style="left:510px;top:553px;width:48px;height:48px" viewBox="0 0 24 24"><path fill="#fff" d="M6 19c0 1.1.9 2 2 2h8c1.1 0 2-.9 2-2V7H6v12zM19 4h-3.5l-1-1h-5l-1 1H5v2h14V4z"/></svg>
<div class="r" style="left:0;top:638px;width:36px;height:2px;background:#3e3f43"></div>
<div class="r" style="left:264px;top:638px;width:319px;height:2px;background:#3e3f43"></div>
<div class="t " style="left:54.00px;top:624.30px;font-size:28px;letter-spacing:0.000px;color:#808183;transform:scaleX(0.9483);transform-origin:0 0;">CONSTRAINTS</div>
</div>
<div class="r" style="left:696px;top:633px;width:16px;height:251px;border-radius:8px;background:#f6c74f"></div>
<div class="tb" style="left:722px;border-radius:8px 0 0 8px;background:rgba(255,255,255,.16);"></div><div class="tb" style="left:816px;border-radius:0 0 0 0;background:transparent;border-left-color:transparent;"></div><div class="tb" style="left:910px;border-radius:0 0 0 0;background:transparent;border-left-color:transparent;"></div><div class="tb" style="left:1004px;border-radius:0 8px 8px 0;background:transparent;border-left-color:transparent;"></div>
<div class="tb" style="left:1119px;border-radius:8px 0 0 8px;background:transparent;"></div><div class="tb" style="left:1213px;border-radius:0 0 0 0;background:transparent;border-left-color:transparent;"></div><div class="tb" style="left:1307px;border-radius:0 0 0 0;background:transparent;border-left-color:transparent;"></div><div class="tb" style="left:1401px;border-radius:0 0 0 0;background:transparent;border-left-color:transparent;"></div><div class="tb" style="left:1495px;border-radius:0 0 0 0;background:transparent;border-left-color:transparent;"></div><div class="tb" style="left:1589px;border-radius:0 0 0 0;background:transparent;border-left-color:transparent;"></div><div class="tb" style="left:1683px;border-radius:0 8px 8px 0;background:transparent;border-left-color:transparent;"></div>
<div class="tb" style="left:1798px;border-radius:8px 8px 8px 8px;background:transparent;"></div>
<div class="tb" style="left:1914px;border-radius:8px 8px 8px 8px;background:transparent;"></div>
<svg class="ic" style="left:746px;top:164px;width:48px;height:48px" viewBox="0 0 24 24"><rect x="4" y="4" width="16" height="16" rx="0.4" fill="none" stroke="#f6c74f" stroke-width="2"/><circle cx="12" cy="12" r="3.1" fill="#f6c74f"/><circle cx="20" cy="12" r="3.1" fill="#f6c74f"/></svg>
<svg class="ic" style="left:840px;top:164px;width:48px;height:48px" viewBox="0 0 24 24"><path fill="#7d73e7" d="M12 2C6.47 2 2 6.47 2 12s4.47 10 10 10 10-4.47 10-10S17.53 2 12 2z"/></svg>
<svg class="ic" style="left:934px;top:164px;width:48px;height:48px" viewBox="0 0 24 24"><path fill="#7d73e7" d="M12 2C6.47 2 2 6.47 2 12s4.47 10 10 10 10-4.47 10-10S17.53 2 12 2zm0 18c-4.42 0-8-3.58-8-8s3.58-8 8-8 8 3.58 8 8-3.58 8-8 8z"/></svg>
<svg class="ic" style="left:1028px;top:164px;width:48px;height:48px" viewBox="0 0 24 24"><circle cx="12" cy="11.85" r="8" fill="none" stroke="#7d73e7" stroke-width="2.3" stroke-linecap="round" stroke-dasharray="8.9 7.855" transform="rotate(-131 12 11.85)"/></svg>
<svg class="ic" style="left:1142px;top:164px;width:48px;height:48px" viewBox="0 0 24 24"><path fill="#7d73e7" d="M12 10.9c-.61 0-1.1.49-1.1 1.1s.49 1.1 1.1 1.1c.61 0 1.1-.49 1.1-1.1s-.49-1.1-1.1-1.1zM12 2C6.48 2 2 6.48 2 12s4.48 10 10 10 10-4.48 10-10S17.52 2 12 2zm2.19 12.19L6 18l3.81-8.19L18 6l-3.81 8.19z"/></svg>
<svg class="ic" style="left:1236px;top:164px;width:48px;height:48px" viewBox="0 0 24 24"><path fill="#7d73e7" d="M15.73 3H8.27L3 8.27v7.46L8.27 21h7.46L21 15.73V8.27L15.73 3zM17 15.74 15.74 17 12 13.26 8.26 17 7 15.74 10.74 12 7 8.26 8.26 7 12 10.74 15.74 7 17 8.26 13.26 12 17 15.74z"/></svg>
<svg class="ic" style="left:1330px;top:164px;width:48px;height:48px" viewBox="0 0 24 24"><path fill="#7d73e7" d="M8 16h8V8H8v8zm4-14C6.48 2 2 6.48 2 12s4.48 10 10 10 10-4.48 10-10S17.52 2 12 2zm0 18c-4.41 0-8-3.59-8-8s3.59-8 8-8 8 3.59 8 8-3.59 8-8 8z"/></svg>
<svg class="ic" style="left:1424px;top:164px;width:48px;height:48px" viewBox="0 0 24 24"><path fill="#7d73e7" d="M6.41 6 5 7.41 9.58 12 5 16.59 6.41 18l6-6z M13 6l-1.41 1.41L16.17 12l-4.58 4.59L13 18l6-6z"/></svg>
<svg class="ic" style="left:1518px;top:164px;width:48px;height:48px" viewBox="0 0 24 24"><path fill="#7d73e7" d="M10 6.35V4.26c-.8.21-1.55.54-2.23.96l1.46 1.46c.25-.12.5-.24.77-.33zm-7.14-.94 2.36 2.36C4.45 8.99 4 10.44 4 12c0 2.21.91 4.2 2.36 5.64L4 20h6v-6l-2.24 2.24C6.68 15.15 6 13.66 6 12c0-1 .25-1.94.68-2.77l8.08 8.08c-.25.13-.5.25-.77.34v2.09c.8-.21 1.55-.54 2.23-.96l2.36 2.36 1.27-1.27L4.14 4.14 2.86 5.41zM20 4h-6v6l2.24-2.24C17.32 8.85 18 10.34 18 12c0 1-.25 1.94-.68 2.77l1.46 1.46C19.55 15.01 20 13.56 20 12c0-2.21-.91-4.2-2.36-5.64L20 4z"/></svg>
<svg class="ic" style="left:1612px;top:164px;width:48px;height:48px" viewBox="0 0 24 24"><path fill="#7d73e7" d="M23 8c0 1.1-.9 2-2 2-.18 0-.35-.02-.51-.07l-3.56 3.55c.05.16.07.34.07.52 0 1.1-.9 2-2 2s-2-.9-2-2c0-.18.02-.36.07-.52l-2.55-2.55c-.16.05-.34.07-.52.07s-.36-.02-.52-.07l-4.55 4.56c.05.16.07.33.07.51 0 1.1-.9 2-2 2s-2-.9-2-2 .9-2 2-2c.18 0 .35.02.51.07l4.56-4.55C8.02 9.36 8 9.18 8 9c0-1.1.9-2 2-2s2 .9 2 2c0 .18-.02.36-.07.52l2.55 2.55c.16-.05.34-.07.52-.07s.36.02.52.07l3.55-3.56C19.02 8.35 19 8.18 19 8c0-1.1.9-2 2-2s2 .9 2 2z"/></svg>
<svg class="ic" style="left:1706px;top:164px;width:48px;height:48px" viewBox="0 0 24 24"><path fill="#7d73e7" d="M21 3 3 10.53v.98l6.84 2.65L12.48 21h.98L21 3z"/></svg>
<svg class="ic" style="left:1822px;top:164px;width:48px;height:48px" viewBox="0 0 24 24"><path fill="#7d73e7" d="M12 2C6.48 2 2 6.48 2 12s4.48 10 10 10 10-4.48 10-10S17.52 2 12 2zm0 18c-4.42 0-8-3.58-8-8 0-1.85.63-3.55 1.69-4.9L16.9 18.31C15.55 19.37 13.85 20 12 20zm6.31-3.1L7.1 5.69C8.45 4.63 10.15 4 12 4c4.42 0 8 3.58 8 8 0 1.85-.63 3.55-1.69 4.9z"/></svg>
<svg class="ic" style="left:1938px;top:164px;width:48px;height:48px" viewBox="0 0 24 24"><path fill="#7d73e7" d="M12 2C8.13 2 5 5.13 5 9c0 5.25 7 13 7 13s7-7.75 7-13c0-3.87-3.13-7-7-7zm0 9.5c-1.38 0-2.5-1.12-2.5-2.5s1.12-2.5 2.5-2.5 2.5 1.12 2.5 2.5-1.12 2.5-2.5 2.5z"/></svg>
<div class="r" style="left:2325px;top:260px;width:131px;height:272px;background:#2e2f35"></div>
<svg class="ic" style="left:2366px;top:292px;width:48px;height:48px" viewBox="0 0 24 24"><path fill="#fff" d="M19 12h-2v3h-3v2h5v-5zM7 9h3V7H5v5h2V9zm14-6H3c-1.1 0-2 .9-2 2v14c0 1.1.9 2 2 2h18c1.1 0 2-.9 2-2V5c0-1.1-.9-2-2-2zm0 16.01H3V4.99h18v14.02z"/></svg>
<svg class="ic" style="left:2366px;top:372px;width:48px;height:48px" viewBox="0 0 24 24"><path fill="#fff" d="M11 9h2v2h-2zm-2 2h2v2H9zm4 0h2v2h-2zm2-2h2v2h-2zM7 9h2v2H7zm12-6H5c-1.1 0-2 .9-2 2v14c0 1.1.9 2 2 2h14c1.1 0 2-.9 2-2V5c0-1.1-.9-2-2-2zM9 18H7v-2h2v2zm4 0h-2v-2h2v2zm4 0h-2v-2h2v2zm2-7h-2v2h2v2h-2v-2h-2v2h-2v-2h-2v2H9v-2H7v2H5v-2h2v-2H5V5h14v6z"/></svg>
<div class="r" style="left:2116px;top:436px;width:308px;height:536px;border-radius:8px;background:#2e2e2e;box-shadow:0 10px 10px -6px rgba(0,0,0,.2),0 16px 20px 2px rgba(0,0,0,.14),0 6px 28px 4px rgba(0,0,0,.12)">
<div class="r" style="left:0;top:448px;width:308px;height:72px;background:#383848"></div>
<div class="t " style="left:30.93px;top:35.31px;font-size:32px;letter-spacing:0.706px;color:#fff;">None</div>
<div class="t " style="left:32.20px;top:107.31px;font-size:32px;letter-spacing:0.634px;color:#fff;">Velocity</div>
<div class="t " style="left:31.16px;top:179.31px;font-size:32px;letter-spacing:0.268px;color:#fff;">Progress</div>
<div class="t " style="left:32.20px;top:251.31px;font-size:32px;letter-spacing:0.524px;color:#fff;">Acceleration</div>
<div class="t " style="left:30.20px;top:323.31px;font-size:32px;letter-spacing:0.619px;color:#fff;">Interval Δt</div>
<div class="t " style="left:32.20px;top:395.31px;font-size:32px;letter-spacing:0.338px;color:#fff;">Angular Velocity</div>
<div class="t " style="left:30.82px;top:467.31px;font-size:32px;letter-spacing:0.462px;color:#fff;">Split Trajectories</div>
</div>
<div class="r" style="left:2299px;top:1117px;width:125px;height:125px;border-radius:50%;background:#7d73e7;box-shadow:0 6px 10px -2px rgba(0,0,0,.2),0 12px 20px 0 rgba(0,0,0,.14),0 2px 36px 0 rgba(0,0,0,.12)"></div>
<svg class="ic" style="left:2330.25px;top:1148.25px;width:62.5px;height:62.5px" viewBox="0 0 24 24" fill="#fff"><circle cx="6" cy="6" r="5"/><rect x="14" y="14" width="9" height="9" rx="2"/><circle cx="5" cy="19" r="3"/><circle cx="19" cy="5" r="3"/><path d="M5 19L19 5" stroke="#fff" stroke-width="1.6"/></svg>
<div class="r" style="left:112px;top:1274px;width:2344px;height:64px;background:#212226"></div>
<div class="r" style="left:112px;top:1274px;width:2344px;height:2px;background:#3e3f43"></div>
<svg class="ic" style="left:158px;top:1284px;width:48px;height:48px" viewBox="0 0 24 24"><path fill="#fff" d="M8 5v14l11-7z"/></svg>
<div class="r" style="left:271px;top:1302px;width:1955px;height:8px;border-radius:4px;background:#45436f"></div>
<div class="r" style="left:247px;top:1282px;width:48px;height:48px;border-radius:50%;background:#7d73e7;box-shadow:0 3px 6px rgba(0,0,0,.3)"></div>
<div class="r" style="left:495.70000000000005px;top:1286px;width:40px;height:40px;border-radius:50%;background:#fff"></div>
<div class="r" style="left:1238.6px;top:1286px;width:40px;height:40px;border-radius:50%;background:#fff"></div>
<div class="r" style="left:1995.7px;top:1286px;width:40px;height:40px;border-radius:50%;background:#fff"></div>
<svg class="ic" style="left:754px;top:1282px;width:48px;height:48px" viewBox="0 0 24 24"><rect x="4" y="4" width="16" height="16" rx="0.4" fill="none" stroke="#fff" stroke-width="2"/><circle cx="12" cy="12" r="3.1" fill="#fff"/><circle cx="20" cy="12" r="3.1" fill="#fff"/></svg>
<svg class="ic" style="left:1588px;top:1282px;width:48px;height:48px" viewBox="0 0 24 24"><rect x="4" y="4" width="16" height="16" rx="0.4" fill="none" stroke="#fff" stroke-width="2"/><circle cx="12" cy="12" r="3.1" fill="#fff"/><circle cx="20" cy="12" r="3.1" fill="#fff"/></svg>
<svg class="ic" style="left:2201.7px;top:1282px;width:48px;height:48px" viewBox="0 0 24 24"><rect x="4" y="4" width="16" height="16" rx="0.4" fill="none" stroke="#e93323" stroke-width="2"/><circle cx="12" cy="12" r="3.1" fill="#e93323"/><circle cx="20" cy="12" r="3.1" fill="#e93323"/></svg>
<div class="t " style="left:2265.24px;top:1282.91px;font-size:32px;letter-spacing:0.398px;color:#fff;">0.0 s / 5.1 s</div>
</div><div id="rim"></div>
<script>(function(){var w=window.innerWidth;if(w&&Math.abs(w-2568)>1){var s=document.body.style;s.transformOrigin='0 0';s.transform='scale('+(w/2568)+')';document.documentElement.style.overflow='hidden';}})();</script>
</body></html>
